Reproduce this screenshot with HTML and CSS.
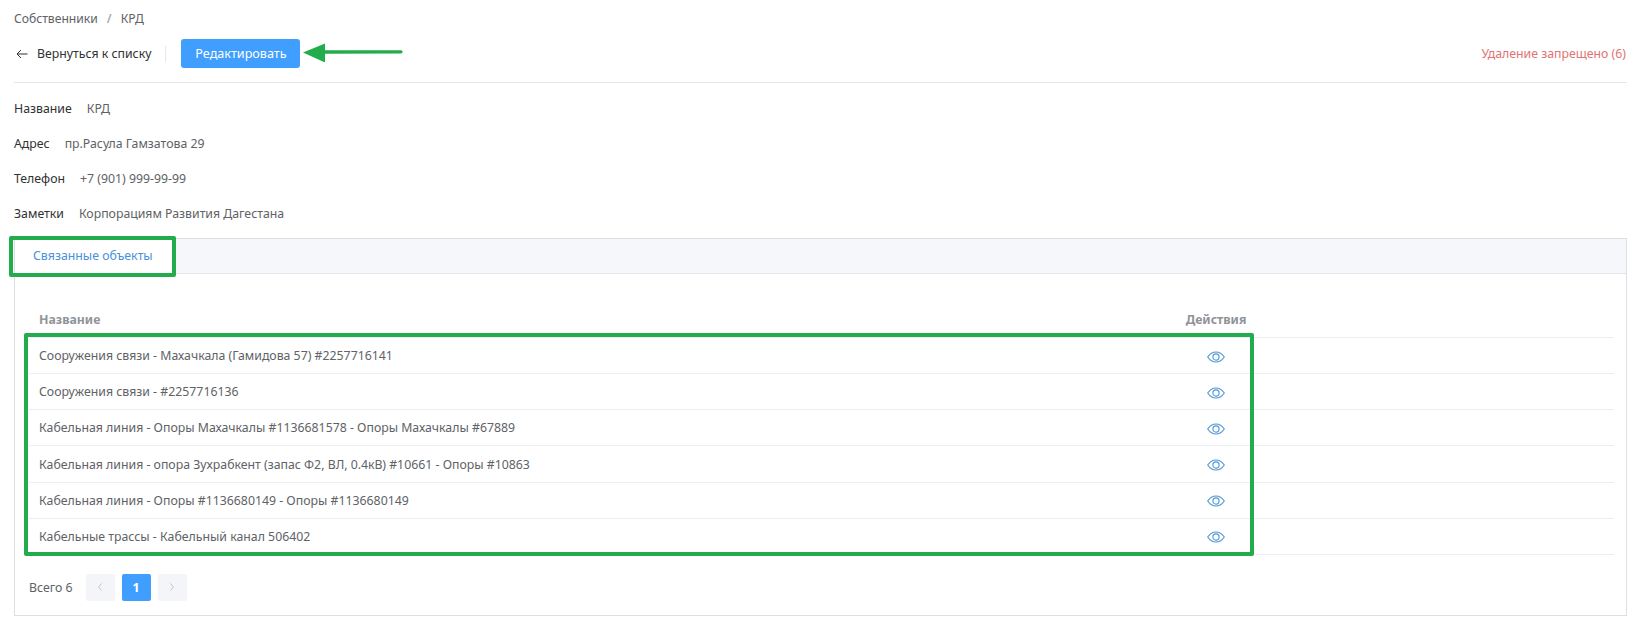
FILE: index.html
```html
<!DOCTYPE html>
<html lang="ru">
<head>
<meta charset="utf-8">
<title>КРД</title>
<link rel="stylesheet" href="styles.css">
</head>
<body>
<main class="page">
  <nav class="crumbs"><span>Собственники</span><span class="sep">/</span><span>КРД</span></nav>
  <header class="toolbar">
    <a class="back">
      <svg class="back-icon" viewBox="0 0 12 10" width="12" height="10"><path d="M11.5 5H1M5 1 1 5l4 4" fill="none" stroke="#303133" stroke-width="1"/></svg>
      <span>Вернуться к списку</span>
    </a>
    <span class="vline"></span>
    <button class="btn">Редактировать</button>
    <span class="denied">Удаление запрещено (6)</span>
  </header>
  <dl class="info">
    <div class="info-row"><dt>Название</dt><dd>КРД</dd></div>
    <div class="info-row"><dt>Адрес</dt><dd>пр.Расула Гамзатова 29</dd></div>
    <div class="info-row"><dt>Телефон</dt><dd>+7 (901) 999-99-99</dd></div>
    <div class="info-row"><dt>Заметки</dt><dd>Корпорациям Развития Дагестана</dd></div>
  </dl>
  <section class="card">
    <div class="tabs"><div class="tab">Связанные объекты</div></div>
    <div class="card-body">
      <div class="table">
        <div class="row head"><div class="name">Название</div><div class="act">Действия</div></div>
        <div class="row"><div class="name">Сооружения связи - Махачкала (Гамидова 57) #2257716141</div><div class="act"><svg class="eye" viewBox="0 0 18 12"><use href="#eye"/></svg></div></div>
        <div class="row"><div class="name">Сооружения связи - #2257716136</div><div class="act"><svg class="eye" viewBox="0 0 18 12"><use href="#eye"/></svg></div></div>
        <div class="row"><div class="name">Кабельная линия - Опоры Махачкалы #1136681578 - Опоры Махачкалы #67889</div><div class="act"><svg class="eye" viewBox="0 0 18 12"><use href="#eye"/></svg></div></div>
        <div class="row"><div class="name">Кабельная линия - опора Зухрабкент (запас Ф2, ВЛ, 0.4кВ) #10661 - Опоры #10863</div><div class="act"><svg class="eye" viewBox="0 0 18 12"><use href="#eye"/></svg></div></div>
        <div class="row"><div class="name">Кабельная линия - Опоры #1136680149 - Опоры #1136680149</div><div class="act"><svg class="eye" viewBox="0 0 18 12"><use href="#eye"/></svg></div></div>
        <div class="row"><div class="name">Кабельные трассы - Кабельный канал 506402</div><div class="act"><svg class="eye" viewBox="0 0 18 12"><use href="#eye"/></svg></div></div>
      </div>
      <div class="pager">
        <span class="total">Всего 6</span>
        <span class="pg"><svg viewBox="0 0 6 10" width="6" height="10"><path d="M4.5 1.5 1.5 5l3 3.5" fill="none" stroke="#c0c4cc"/></svg></span>
        <span class="pg on">1</span>
        <span class="pg"><svg viewBox="0 0 6 10" width="6" height="10"><path d="M1.5 1.5 4.5 5l-3 3.5" fill="none" stroke="#c0c4cc"/></svg></span>
      </div>
    </div>
  </section>
</main>

<svg class="defs" width="0" height="0"><defs>
  <g id="eye" fill="none" stroke="#4f95d6" stroke-width="1.1">
    <path d="M.7 6C3 2.6 5.8 1 9 1s6 1.6 8.3 5C15 9.4 12.2 11 9 11S3 9.4.7 6Z"/>
    <circle cx="9" cy="6" r="3.1"/>
  </g>
</defs></svg>

<div class="mark mark-tab"></div>
<div class="mark mark-table"></div>
<svg class="mark-arrow" viewBox="0 0 100 20" width="100" height="20">
  <path d="M0 10.5 22 1.5V8.2L98 8.2a1.6 1.6 0 0 1 0 3.2L22 11.8V20.5Z" fill="#22ac4c"/>
</svg>
</body>
</html>
```
FILE: styles.css
```css
* { box-sizing: border-box; }
html, body { margin: 0; background: #fff; }
body {
  position: relative;
  height: 623px;
  overflow: hidden;
  font-family: "Noto Sans", "Open Sans", sans-serif;
  font-size: 12.3px;
  color: #606266;
}
.page { padding: 10px 7px 0 14px; }
.crumbs { display: flex; gap: 9px; height: 17px; line-height: 17px; font-size: 12.15px; }
.sep { color: #a8abb2; font-weight: 600; }
.toolbar {
  display: flex;
  align-items: center;
  height: 56px;
  border-bottom: 1px solid #e6e6e6;
  padding-bottom: 2px;
  padding-right: 1px;
}
.back { display: flex; align-items: center; gap: 9px; color: #303133; }
.back-icon { flex: none; margin-left: 2px; }
.vline { width: 1px; height: 16px; background: #e4e7ed; margin: 0 15px 0 14px; }
.btn {
  width: 119px;
  height: 29px;
  border: 0;
  border-radius: 3px;
  background: #409eff;
  color: #fff;
  font: inherit;
  font-size: 12.6px;
  padding: 0;
}
.denied { margin-left: auto; color: #e07474; }
.info { margin: 0; padding-top: 8px; }
.info-row { display: flex; gap: 15px; height: 35px; line-height: 35px; margin: 0; }
.info-row dt { color: #303133; }
.info-row dd { margin: 0; }
.card {
  margin-top: 7px;
  height: 378px;
  border: 1px solid #dcdfe6;
}
.tabs { height: 35px; background: #f5f7fa; border-bottom: 1px solid #e4e7ed; }
.tab {
  width: 160px;
  height: 35px;
  line-height: 33px;
  padding-left: 18px;
  background: #fff;
  color: #4a90d9;
}
.card-body { padding: 28px 12px 0 14px; }
.table { width: 1585px; }
.row {
  display: flex;
  align-items: center;
  height: 36.17px;
  border-bottom: 1px solid #ebeef5;
  padding-left: 10px;
}
.head { height: 36px; font-weight: 700; color: #909399; }
.name { width: 1132px; flex: none; }
.act { width: 90px; display: flex; justify-content: center; }
.eye { width: 18px; height: 12px; display: block; margin-top: 2px; }
.pager { display: flex; align-items: center; margin-top: 19px; }
.total { margin-right: 13px; }
.pg {
  display: flex;
  align-items: center;
  justify-content: center;
  width: 29px;
  height: 27px;
  margin-right: 7px;
  border-radius: 2px;
  background: #f4f5f8;
  font-weight: 700;
}
.pg.on { background: #409eff; color: #fff; }
.defs { position: absolute; }
.mark { position: absolute; border: 4px solid #22ac4c; border-radius: 2px; }
.mark-tab { left: 9px; top: 236px; width: 167px; height: 41px; }
.mark-table { left: 24px; top: 333px; width: 1230px; height: 223px; }
.mark-arrow { position: absolute; left: 303px; top: 42px; }
```
